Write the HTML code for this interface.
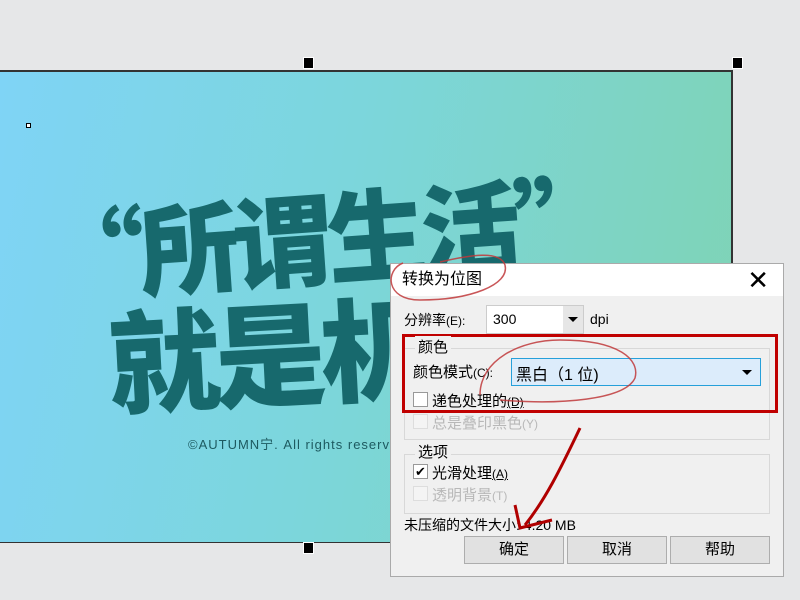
<!DOCTYPE html>
<html><head><meta charset="utf-8"><style>
body{margin:0;width:800px;height:600px;background:#e6e7e8;position:relative;overflow:hidden;font-family:"Liberation Sans","Noto Sans CJK SC",sans-serif}
.canvas{position:absolute;left:0;top:70px;width:731px;height:470px;border-top:2px solid #333;border-right:2px solid #333;border-bottom:1px solid #333;background:linear-gradient(100deg,#7fd4f6 0%,#7cd6dc 45%,#7fd3b4 100%);overflow:hidden}
.h{position:absolute;width:9px;height:10px;background:#000;border:1px solid #fff}
.big{position:absolute;font-family:"Noto Sans CJK SC",sans-serif;font-weight:900;color:#17696d;white-space:nowrap;letter-spacing:-6px}
.dlg{position:absolute;left:390px;top:263px;width:394px;height:314px;background:#f0f0f0;border:1px solid #aaa;box-sizing:border-box}
.title{height:32px;background:#fff;font-size:16px;line-height:32px;padding-left:11px;color:#000}
.t{position:absolute;font-size:14px;color:#000;white-space:nowrap}
.g{color:#b8b8b8}
.cb{position:absolute;width:13px;height:13px;border:1px solid #999;background:#fff}
.cbg{border-color:#ddd;background:#f4f4f4}
.grp{position:absolute;border:1px solid #d8d8d8}
.btn{position:absolute;top:272px;width:98px;height:26px;background:#e1e1e1;border:1px solid #adadad;font-size:15px;text-align:center;line-height:26px}
</style></head><body>
<div class="canvas">
<div style="position:absolute;left:26px;top:51px;width:3px;height:3px;border:1px solid #000;background:#fff"></div>
<div class="big" style="left:45px;top:108px;font-size:100px;transform:rotate(-4deg);transform-origin:left center">“所谓生活”</div>
<div class="big" style="left:108px;top:205px;font-size:112px;transform:rotate(-3deg);transform-origin:left center">就是机</div>
<div style="position:absolute;left:188px;top:362px;font-size:13px;color:#1d5a60;letter-spacing:1px">©AUTUMN宁. All rights reserved</div>
</div>
<div class="h" style="left:303px;top:57px"></div>
<div class="h" style="left:732px;top:57px"></div>
<div class="h" style="left:303px;top:542px"></div>
<div class="dlg">
<div class="title">转换为位图</div>
<div style="position:absolute;right:14px;top:2px;font-size:26px;line-height:28px;font-weight:300">✕</div>
<div class="t" style="left:13px;top:46px">分辨率<span style="font-size:12px">(E):</span></div>
<div style="position:absolute;left:95px;top:41px;width:96px;height:27px;background:#fff;border:1px solid #ccc"><span style="position:absolute;left:6px;top:5px;font-size:14px">300</span><div style="position:absolute;right:0;top:0;width:20px;height:27px;background:#e6e6e6"><div style="position:absolute;left:5px;top:11px;border:5px solid transparent;border-top-color:#000;border-bottom:0"></div></div></div>
<div class="t" style="left:199px;top:47px">dpi</div>
<div class="grp" style="left:13px;top:84px;width:364px;height:90px"></div>
<div style="position:absolute;left:11px;top:70px;width:370px;height:73px;border:3px solid #c00000"></div>
<div class="t" style="left:24px;top:72px;font-size:15px;background:#f0f0f0;padding:0 3px">颜色</div>
<div class="t" style="left:22px;top:97px;font-size:15px">颜色模式<span style="font-size:12px">(C):</span></div>
<div style="position:absolute;left:120px;top:94px;width:248px;height:26px;background:#dcecfb;border:1px solid #26a0da"><span style="position:absolute;left:4px;top:2px;font-size:16px">黑白（1 位)</span><div style="position:absolute;right:8px;top:11px;border:5px solid transparent;border-top-color:#000;border-bottom:0"></div></div>
<div class="cb" style="left:22px;top:128px"></div>
<div class="t" style="left:41px;top:126px;font-size:15px">递色处理的<span style="font-size:12px;text-decoration:underline">(D)</span></div>
<div class="cb cbg" style="left:22px;top:150px"></div>
<div class="t g" style="left:41px;top:148px;font-size:15px">总是叠印黑色<span style="font-size:12px">(Y)</span></div>
<div class="grp" style="left:13px;top:190px;width:364px;height:58px"></div>
<div class="t" style="left:24px;top:177px;font-size:15px;background:#f0f0f0;padding:0 3px">选项</div>
<div class="cb" style="left:22px;top:200px;font-size:13px;line-height:13px;text-align:center">✔</div>
<div class="t" style="left:41px;top:198px;font-size:15px">光滑处理<span style="font-size:12px;text-decoration:underline">(A)</span></div>
<div class="cb cbg" style="left:22px;top:222px"></div>
<div class="t g" style="left:41px;top:220px;font-size:15px">透明背景<span style="font-size:12px">(T)</span></div>
<div class="t" style="left:13px;top:251px">未压缩的文件大小: 4.20 MB</div>
<div class="btn" style="left:73px">确定</div>
<div class="btn" style="left:176px">取消</div>
<div class="btn" style="left:279px">帮助</div>
</div>
<svg style="position:absolute;left:0;top:0" width="800" height="600">
<g fill="none" stroke="#c0393b" stroke-width="1.5" opacity="0.85">
<path d="M403 263 C385 270 385 300 420 300 C470 300 510 285 505 265 C500 250 470 255 440 262"/>
<path d="M480 395 C480 360 520 340 560 340 C620 340 640 360 635 378 C625 400 560 405 500 400"/>
</g>
<path d="M580 428 C560 470 545 500 525 525" stroke="#b00000" stroke-width="3" fill="none"/>
<path d="M515 505 L520 528 L552 520" stroke="#b00000" stroke-width="3" fill="none"/>
</svg>
</body></html>
